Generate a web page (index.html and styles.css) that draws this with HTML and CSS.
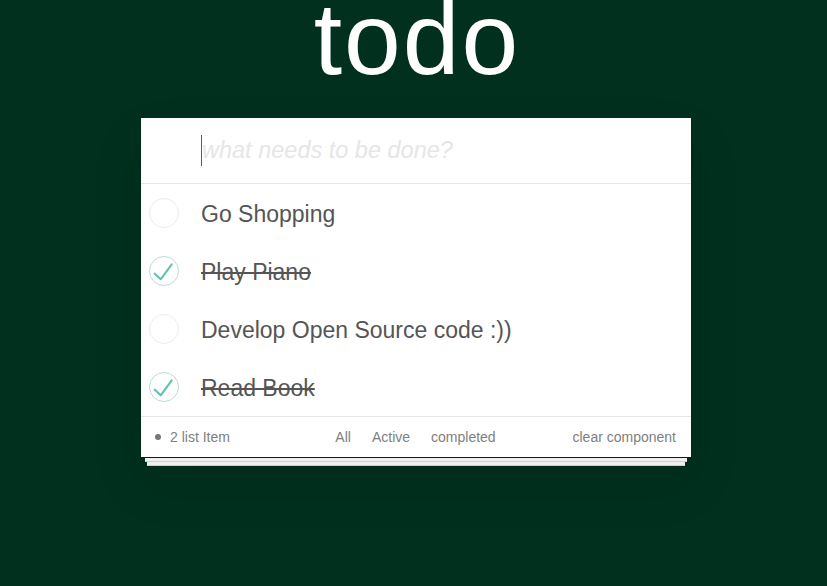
FILE: index.html
```html
<!DOCTYPE html>
<html lang="en">
<head>
<meta charset="utf-8">
<title>todo</title>
<link rel="stylesheet" href="styles.css">
</head>
<body>
<div class="app">
  <h1 class="title">todo</h1>
  <section class="card">
    <header class="new-todo">
      <span class="caret"></span><span class="placeholder">what needs to be done?</span>
    </header>
    <ul class="list">
      <li class="item">
        <span class="toggle"></span>
        <span class="label">Go Shopping</span>
      </li>
      <li class="item done">
        <span class="toggle checked"><svg viewBox="0 0 30 30" width="30" height="30"><path d="M5.6 17.6 L11.7 23.3 L22.7 8.3" fill="none" stroke="#5dc2af" stroke-width="2" stroke-linecap="round" stroke-linejoin="round"/></svg></span>
        <span class="label">Play Piano</span>
      </li>
      <li class="item">
        <span class="toggle"></span>
        <span class="label">Develop Open Source code :))</span>
      </li>
      <li class="item done">
        <span class="toggle checked"><svg viewBox="0 0 30 30" width="30" height="30"><path d="M5.6 17.6 L11.7 23.3 L22.7 8.3" fill="none" stroke="#5dc2af" stroke-width="2" stroke-linecap="round" stroke-linejoin="round"/></svg></span>
        <span class="label">Read Book</span>
      </li>
    </ul>
    <footer class="footer">
      <div class="count"><span class="dot"></span>2 list Item</div>
      <div class="filters">
        <span class="filter">All</span>
        <span class="filter">Active</span>
        <span class="filter">completed</span>
      </div>
      <div class="clear">clear component</div>
    </footer>
  </section>
  <div class="sheet sheet-1"></div>
  <div class="sheet sheet-2"></div>
</div>
</body>
</html>
```
FILE: styles.css
```css
html, body {
  margin: 0;
  padding: 0;
}
body {
  background: #01301e;
  font-family: "Liberation Sans", Arial, sans-serif;
  color: #4d4d4d;
  height: 586px;
  overflow: hidden;
}
.app {
  width: 550px;
  margin-left: 141px;
}
.title {
  margin: 0;
  height: 118px;
  line-height: 79px;
  font-size: 102px;
  font-weight: normal;
  color: #ffffff;
  text-align: center;
  letter-spacing: 2px;
  text-indent: 2px;
}
.card {
  background: #ffffff;
  box-shadow: 0 1px 1px rgba(0, 0, 0, 0.25), 0 25px 50px rgba(0, 0, 0, 0.1);
}
.new-todo {
  height: 65px;
  border-bottom: 1px solid #e6e6e6;
  display: flex;
  align-items: center;
  padding-left: 60px;
}
.caret {
  display: inline-block;
  width: 1px;
  height: 31px;
  background: #5a5a5a;
}
.placeholder {
  font-size: 23.5px;
  font-style: italic;
  color: #e6e6e6;
}
.list {
  list-style: none;
  margin: 0;
  padding: 0;
}
.item {
  height: 58px;
  display: flex;
  align-items: center;
  padding-left: 8px;
}
.toggle {
  width: 28px;
  height: 28px;
  border: 1px solid #ededed;
  border-radius: 50%;
  position: relative;
  flex: none;
}
.toggle.checked {
  border-color: #bddad5;
}
.toggle svg {
  position: absolute;
  left: -1px;
  top: -1px;
}
.label {
  margin-left: 22px;
  padding-top: 2px;
  font-size: 23px;
  color: #555555;
}
.done .label {
  text-decoration: line-through;
}
.footer {
  height: 40px;
  border-top: 1px solid #e6e6e6;
  display: grid;
  grid-template-columns: 1fr auto 1fr;
  align-items: center;
  font-size: 14px;
  color: #808080;
  padding: 0 15px 0 14px;
}
.count {
  display: flex;
  align-items: center;
}
.dot {
  width: 6px;
  height: 6px;
  border-radius: 50%;
  background: #777777;
  margin-right: 9px;
}
.filters {
  display: flex;
  gap: 21px;
}
.clear {
  text-align: right;
}
.sheet {
  height: 3px;
  background: #efefef;
  border-bottom: 1px solid #cfcfcf;
}
.sheet-1 {
  margin: 1px 4px 0 4px;
}
.sheet-2 {
  margin: 0 6px 0 6px;
}
```
